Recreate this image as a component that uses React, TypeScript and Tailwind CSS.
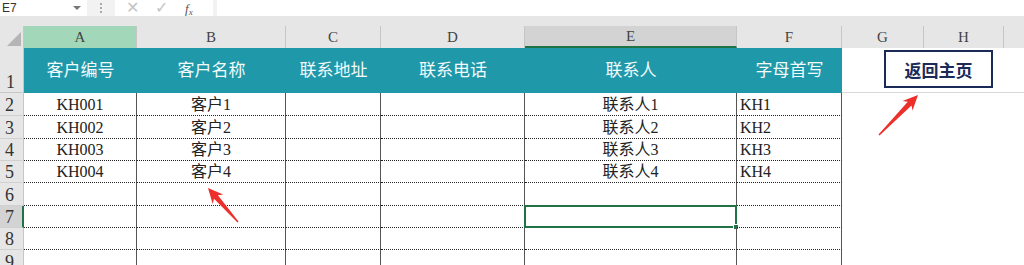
import React from "react";

const serif = "font-['Liberation_Serif','Noto_Sans_CJK_SC',serif]";

type Col = { key: string; w: string };
const dataCols: Col[] = [
  { key: "A", w: "w-[113px]" },
  { key: "B", w: "w-[149px]" },
  { key: "C", w: "w-[95px]" },
  { key: "D", w: "w-[144px]" },
  { key: "E", w: "w-[212px]" },
  { key: "F", w: "w-[105px]" },
];

const heights = ["h-[23px]", "h-[23px]", "h-[22px]", "h-[22px]", "h-[23px]", "h-[22px]", "h-[22px]", "h-[23px]"];

const rows: Record<string, string>[] = [
  { A: "KH001", B: "客户1", E: "联系人1", F: "KH1" },
  { A: "KH002", B: "客户2", E: "联系人2", F: "KH2" },
  { A: "KH003", B: "客户3", E: "联系人3", F: "KH3" },
  { A: "KH004", B: "客户4", E: "联系人4", F: "KH4" },
  {},
  {},
  {},
  {},
];

function Arrow({ x1, y1, x2, y2 }: { x1: number; y1: number; x2: number; y2: number }) {
  const dx = x2 - x1;
  const dy = y2 - y1;
  const len = Math.sqrt(dx * dx + dy * dy);
  const ux = dx / len;
  const uy = dy / len;
  const px = -uy;
  const py = ux;
  const headLen = 15;
  const headW = 7;
  const shaftW = 2.6;
  const tailW = 0.7;
  const bx = x2 - ux * headLen;
  const by = y2 - uy * headLen;
  const sx = x2 - ux * (headLen - 3);
  const sy = y2 - uy * (headLen - 3);
  const pts = [
    [x1 + px * tailW, y1 + py * tailW],
    [sx + px * shaftW, sy + py * shaftW],
    [bx + px * headW, by + py * headW],
    [x2, y2],
    [bx - px * headW, by - py * headW],
    [sx - px * shaftW, sy - py * shaftW],
    [x1 - px * tailW, y1 - py * tailW],
  ]
    .map((p) => p[0].toFixed(1) + "," + p[1].toFixed(1))
    .join(" ");
  return <polygon points={pts} fill="#ec2f2b" />;
}

export default function App() {
  return (
    <div className="relative w-[1024px] h-[265px] overflow-hidden bg-white font-['Liberation_Sans',sans-serif]">
      {/* formula bar */}
      <div className="flex h-[16px] bg-[#f2f2f2]">
        <div className="w-[87px] bg-white flex items-center justify-between pl-[2px] pr-[6px]">
          <span className="text-[12px] text-[#333] leading-none">E7</span>
          <span className="w-0 h-0 border-l-[4px] border-r-[4px] border-t-[4px] border-l-transparent border-r-transparent border-t-[#777]" />
        </div>
        <div className="w-[28px] flex flex-col items-center justify-center gap-[2px]">
          <span className="w-[2px] h-[2px] bg-[#aaa]" />
          <span className="w-[2px] h-[2px] bg-[#aaa]" />
          <span className="w-[2px] h-[2px] bg-[#aaa]" />
        </div>
        <div className="w-[98px] bg-white flex items-center">
          <span className="ml-[11px] text-[16px] leading-none text-[#c4c4c4]">✕</span>
          <span className="ml-[16px] text-[16px] leading-none text-[#c4c4c4]">✓</span>
          <span className="ml-[17px] text-[13px] leading-none italic text-[#555] font-['Liberation_Serif',serif]">
            f<sub className="text-[9px]">x</sub>
          </span>
        </div>
        <div className="w-[4px]" />
        <div className="flex-1 bg-white" />
      </div>
      <div className="h-[10px] bg-[#e6e6e6]" />

      {/* column headers */}
      <div className={`flex h-[22px] bg-[#e6e6e6] text-[15px] text-[#444] ${serif}`}>
        <div className="w-[24px] relative border-r border-[#c6c6c6]">
          <div
            className="absolute right-[2px] bottom-[2px] w-0 h-0"
            style={{ borderBottom: "14px solid #b5b5b5", borderLeft: "14px solid transparent" }}
          />
        </div>
        <div className="w-[113px] bg-[#a2d8b9] flex items-center justify-center border-r border-[#c6c6c6]">A</div>
        <div className="w-[149px] flex items-center justify-center border-r border-[#c6c6c6]">B</div>
        <div className="w-[95px] flex items-center justify-center border-r border-[#c6c6c6]">C</div>
        <div className="w-[144px] flex items-center justify-center border-r border-[#c6c6c6]">D</div>
        <div className="w-[212px] bg-[#d3d3d3] flex items-center justify-center border-r border-[#c6c6c6] border-b-2 border-b-[#217346]">E</div>
        <div className="w-[105px] flex items-center justify-center border-r border-[#c6c6c6]">F</div>
        <div className="w-[82px] flex items-center justify-center border-r border-[#c6c6c6]">G</div>
        <div className="w-[80px] flex items-center justify-center border-r border-[#c6c6c6]">H</div>
        <div className="flex-1" />
      </div>

      {/* row 1 */}
      <div className="flex h-[45px]">
        <div className={`w-[24px] bg-[#e6e6e6] border-r border-b border-[#c6c6c6] flex items-end pl-[6px] pb-[1px] text-[18px] leading-none text-[#333] ${serif}`}>
          1
        </div>
        <div className="flex bg-[#1f98a9] text-[17px] text-[#f2fafb] font-['Noto_Sans_CJK_SC',sans-serif]">
          {["客户编号", "客户名称", "联系地址", "联系电话", "联系人", "字母首写"].map((t, i) => (
            <div key={t} className={`${dataCols[i].w} flex items-center justify-center pb-[3px]`}>
              {t}
            </div>
          ))}
        </div>
        <div className="flex-1 border-b border-[#d8d8d8]" />
      </div>

      {/* data rows */}
      {rows.map((r, ri) => {
        const rowNum = ri + 2;
        const selected = rowNum === 7;
        return (
          <div key={rowNum} className={`flex ${heights[ri]}`}>
            <div
              className={`w-[24px] flex items-end pl-[5px] text-[18px] leading-none text-[#333] ${serif} ${
                selected ? "bg-[#d3d3d3] border-r-2 border-r-[#217346]" : "bg-[#e6e6e6] border-r border-[#c6c6c6]"
              } border-b border-b-[#d0d0d0]`}
            >
              <span className="pb-[1px]">{rowNum}</span>
            </div>
            {dataCols.map((c) => {
              const v = r[c.key];
              const isSel = selected && c.key === "E";
              return (
                <div
                  key={c.key}
                  className={`${c.w} relative flex items-end ${
                    c.key === "F" ? "justify-start pl-[3px]" : "justify-center"
                  } pb-[1px] border-r border-r-[#555] border-b border-b-[#222] border-dotted text-[16px] leading-[19px] text-[#222] ${serif}`}
                  style={{ borderRightStyle: "solid" }}
                >
                  {v ?? ""}
                  {isSel && (
                    <div className="absolute -left-[1px] -top-[1px] -right-[1px] -bottom-[1px] border-2 border-[#217346]">
                      <div className="absolute -right-[4px] -bottom-[4px] w-[6px] h-[6px] bg-[#217346] border border-white" />
                    </div>
                  )}
                </div>
              );
            })}
            <div className="flex-1" />
          </div>
        );
      })}

      {/* shape button */}
      <div className="absolute left-[884px] top-[50px] w-[109px] h-[38px] border-2 border-[#1b2a57] bg-white flex items-center justify-center">
        <span className="text-[17px] font-bold text-[#1b2a57] font-['Noto_Sans_CJK_SC',sans-serif] leading-none">返回主页</span>
      </div>

      {/* arrows */}
      <svg className="absolute left-0 top-0 pointer-events-none" width="1024" height="265">
        <Arrow x1={238} y1={222} x2={208} y2={188} />
        <Arrow x1={879} y1={135} x2={918} y2={95} />
      </svg>
    </div>
  );
}
